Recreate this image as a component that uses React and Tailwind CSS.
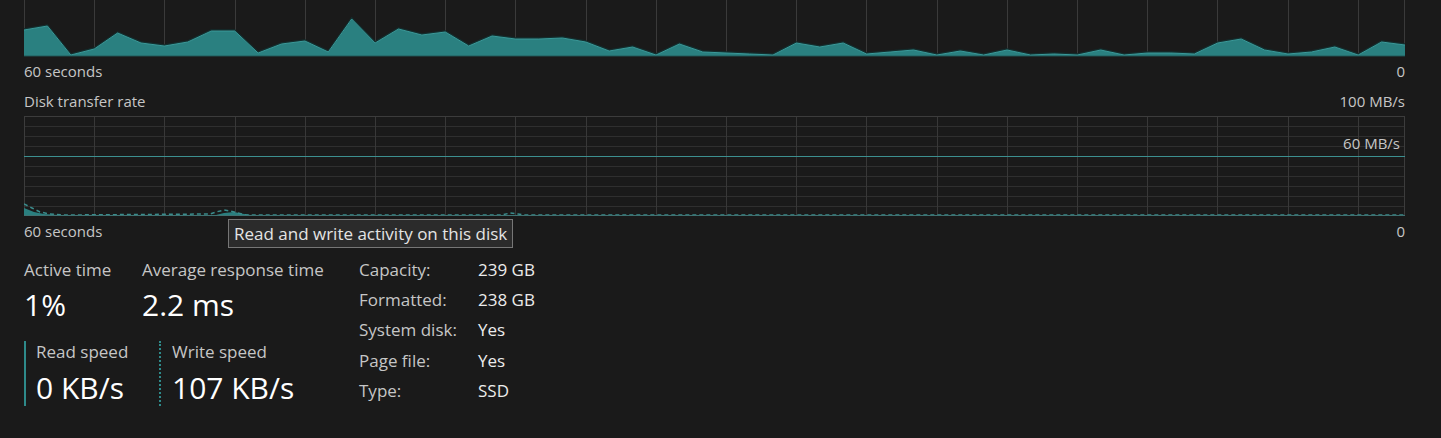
import React from "react";

const W = 1381;
const topVals = [30,26,55,49,33,43,46,42,31,31,53,44,41,52,19,43,29,35,32,46,36,39,39,38,42,51,47,55,44,52,53,54,55,43,47,43,54,52,50,55,51,55,50,55,54,55,50,55,53,53,54,43,39,50,54,52,47,55,42,45];
const step = W / 59;
const gridX = [];
for (let x = 0; x <= W + 0.5; x += 70.2) gridX.push(Math.round(x) + 0.5);

function TopChart() {
  const pts = topVals.map((v, i) => `${(i * step).toFixed(1)},${v}`).join(" ");
  return (
    <svg width={W} height={57} className="block">
      {gridX.map((x) => (
        <line key={x} x1={x} y1={0} x2={x} y2={56} stroke="#3a3a3a" strokeWidth="1" />
      ))}
      <line x1={W - 0.5} y1={0} x2={W - 0.5} y2={56} stroke="#3a3a3a" />
      <polygon points={`0,56 ${pts} ${W},56`} fill="#2a8080" />
      <polyline points={topVals.map((v, i) => `${(i * step).toFixed(1)},${v - 1}`).join(" ")} fill="none" stroke="#132e2e" strokeWidth="1.5" />
      <polyline points={pts} fill="none" stroke="#3a9a9a" strokeWidth="1" />
      <line x1={0} y1={56.5} x2={W} y2={56.5} stroke="#1c3535" strokeWidth="1.5" />
    </svg>
  );
}

function BottomChart() {
  const hLines = [10, 20, 30, 50, 60, 70, 80, 90];
  const write = "0,88 8,92 16,96 26,98 40,99 186,98 192,96 200,94 206,95 214,97 222,99 478,99 486,97 494,98 500,99 1381,99";
  const read = "0,92 10,96 20,98 40,99.5 190,99.5 200,97 210,96 220,98 230,99.5 0,99.5";
  return (
    <svg width={W} height={101} className="block">
      {hLines.map((y) => (
        <line key={y} x1={0} y1={y + 0.5} x2={W} y2={y + 0.5} stroke="#2f2f2f" />
      ))}
      {gridX.map((x) => (
        <line key={x} x1={x} y1={0} x2={x} y2={100} stroke="#383838" />
      ))}
      <rect x={0.5} y={0.5} width={W - 1} height={99} fill="none" stroke="#3c3c3c" />
      <line x1={0} y1={40.5} x2={W} y2={40.5} stroke="#3c8f8f" />
      <polygon points={read} fill="#2a7f7f" />
      <polyline points={write} fill="none" stroke="#3a8c8c" strokeWidth="1.5" strokeDasharray="4 3" />
      <line x1={0} y1={99.5} x2={W} y2={99.5} stroke="#3f7272" />
    </svg>
  );
}

export default function App() {
  return (
    <div className="w-[1441px] h-[438px] overflow-hidden bg-[#1a1a1a] pl-[24px] pr-[36px] font-['Open_Sans',sans-serif] text-[#c6c6c6]">
      <TopChart />
      <div className="flex h-[29px] items-center justify-between text-[15px]">
        <span>60 seconds</span>
        <span>0</span>
      </div>
      <div className="flex h-[30px] items-center justify-between text-[15px]">
        <span>Disk transfer rate</span>
        <span>100 MB/s</span>
      </div>
      <div className="relative">
        <BottomChart />
        <span className="absolute right-[5px] top-[17px] text-[15px] leading-[20px]">60 MB/s</span>
      </div>
      <div className="relative flex h-[29px] items-center justify-between text-[15px]">
        <span>60 seconds</span>
        <span>0</span>
        <div className="absolute left-[204px] top-[2px] border border-[#767676] bg-[#2b2b2b] px-[5px] text-[17px] leading-[27px] text-[#e4e4e4] whitespace-nowrap">
          Read and write activity on this disk
        </div>
      </div>
      <div className="mt-[12px] flex">
        <div className="flex w-[335px] flex-col">
          <div className="flex">
            <div className="w-[118px]">
              <div className="text-[17px] leading-[24px]">Active time</div>
              <div className="mt-[3px] text-[30px] leading-[40px] text-white">1%</div>
            </div>
            <div>
              <div className="text-[17px] leading-[24px]">Average response time</div>
              <div className="mt-[3px] text-[30px] leading-[40px] text-white">2.2 ms</div>
            </div>
          </div>
          <div className="mt-[16px] flex">
            <div className="w-[135px] border-l-2 border-[#2e8a8a] pl-[10px] pt-[1px]">
              <div className="text-[17px] leading-[20px]">Read speed</div>
              <div className="mt-[8px] text-[30px] leading-[36px] text-white">0 KB/s</div>
            </div>
            <div className="border-l-2 border-dotted border-[#2e8a8a] pl-[11px] pt-[1px]">
              <div className="text-[17px] leading-[20px]">Write speed</div>
              <div className="mt-[8px] text-[30px] leading-[36px] text-white">107 KB/s</div>
            </div>
          </div>
        </div>
        <div className="-mt-[3px] grid grid-cols-[119px_auto] text-[17px] leading-[30px]">
          <span>Capacity:</span><span className="text-[#ececec]">239 GB</span>
          <span>Formatted:</span><span className="text-[#ececec]">238 GB</span>
          <span>System disk:</span><span className="text-[#ececec]">Yes</span>
          <span>Page file:</span><span className="text-[#ececec]">Yes</span>
          <span>Type:</span><span className="text-[#ececec]">SSD</span>
        </div>
      </div>
    </div>
  );
}
